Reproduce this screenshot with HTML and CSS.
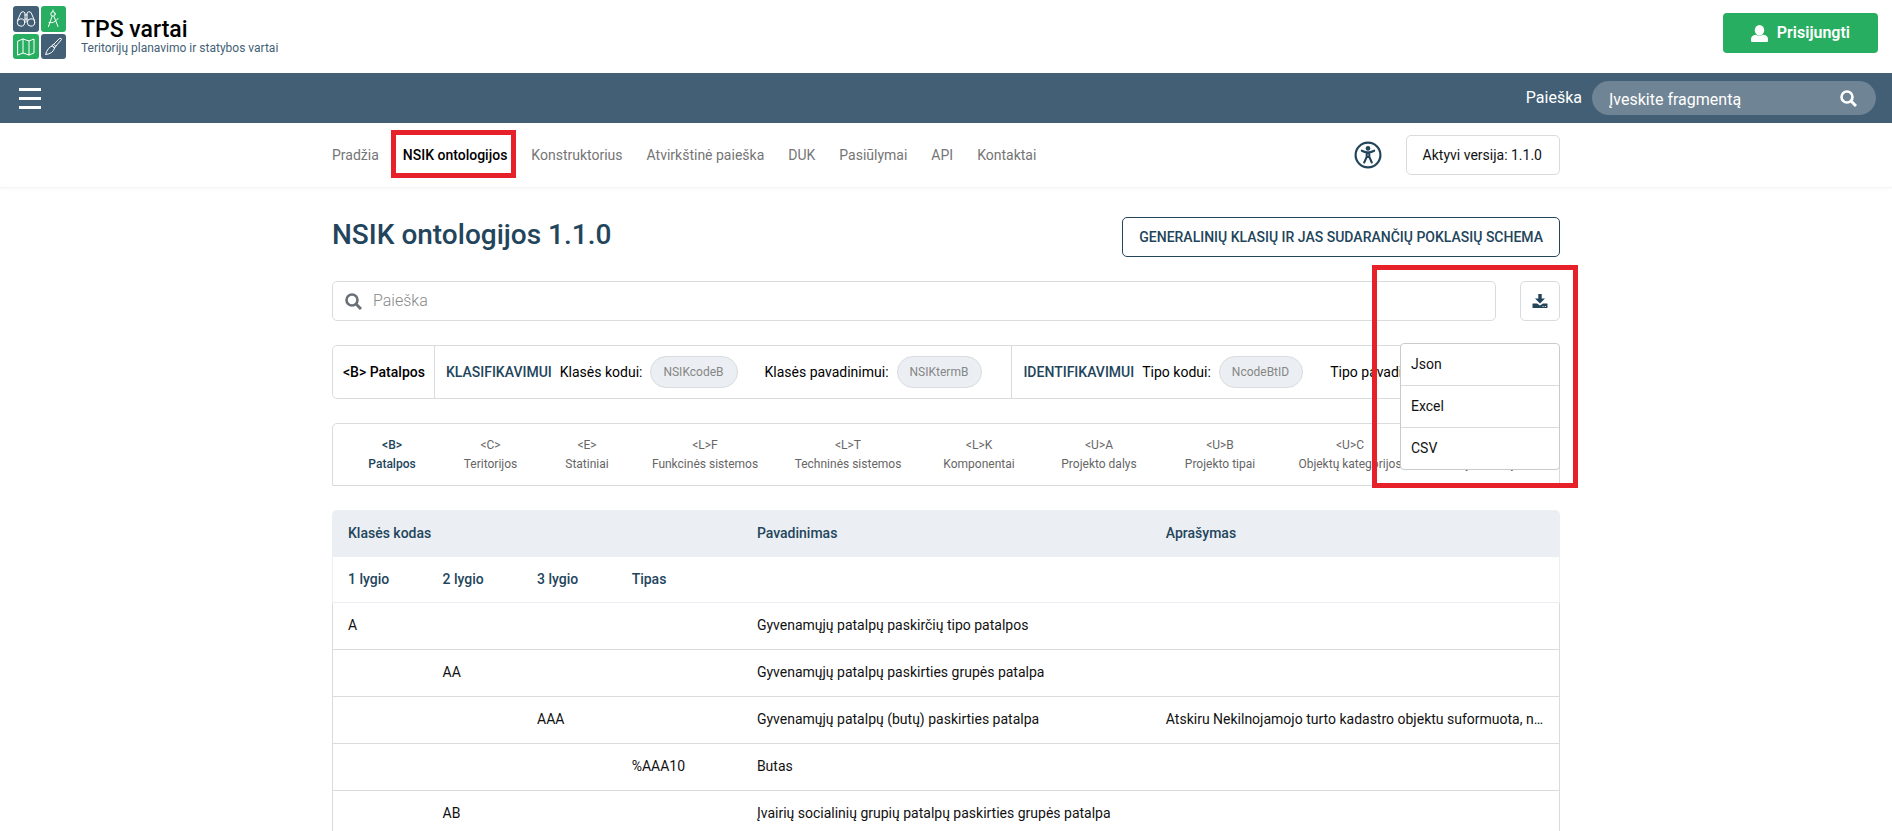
FILE: index.html
```html
<!DOCTYPE html>
<html lang="lt">
<head>
<meta charset="utf-8">
<meta name="viewport" content="width=device-width, initial-scale=1">
<title>TPS vartai</title>
<link rel="stylesheet" href="styles.css">
</head>
<body>
<header class="top">
  <a class="brand" href="#">
    <svg class="brand-logo" viewBox="0 0 54 54" aria-hidden="true">
      <rect x="0" y="0" width="26" height="26" rx="3" fill="#435f75"/>
      <rect x="28" y="0" width="25" height="26" rx="3" fill="#28ae60"/>
      <rect x="0" y="28" width="26" height="25" rx="3" fill="#28ae60"/>
      <rect x="28" y="28" width="25" height="25" rx="3" fill="#435f75"/>
      <g fill="none" stroke="#fff" stroke-width="1" stroke-linecap="round" stroke-linejoin="round">
        <circle cx="8" cy="16.500" r="3.700"/><circle cx="18" cy="16.500" r="3.700"/>
        <path d="M4.500 14.500 8 6.500q2.500-2 4 .5v9M21.500 14.500 18 6.500q-2.500-2-4 .5v9M12 9h2M12 13h2"/>
        <circle cx="40" cy="8" r="2.200"/><path d="M40 4v1.500M39 10.500 35.500 20.500M41 10.500l4 10M36 16.500q5 1.500 9-4"/>
        <path d="m5 35 5-2 6 2 5-2v14l-5 2-6-2-5 2zM10 33v14M16 35v14"/>
        <path d="m41 38 5.500-5.500q2-.8 2 1L43 40zM41 38l-2 1.500 2.500 2.500L43 40M39 40q-4 1-6.500 8.500 7-.5 9-6z"/>
      </g>
    </svg>
    <span class="brand-text">
      <span class="brand-name">TPS vartai</span>
      <span class="brand-sub">Teritorijų planavimo ir statybos vartai</span>
    </span>
  </a>
  <button class="login" type="button">
    <svg width="17" height="17" viewBox="0 0 17 17" fill="currentColor" aria-hidden="true"><ellipse cx="8.500" cy="5.200" rx="4.700" ry="5.200"/><path d="M0 16v-2q0-3.500 4.500-4.200 4 2 8 0Q17 10.500 17 14v2q0 1-1 1H1q-1 0-1-1z"/></svg>
    Prisijungti
  </button>
</header>

<div class="bar">
  <button class="burger" type="button" aria-label="Meniu"><i></i><i></i><i></i></button>
  <form class="bar-search">
    <label for="fragment">Paieška</label>
    <div class="pill">
      <input id="fragment" type="text" placeholder="Įveskite fragmentą">
      <button type="button" aria-label="Ieškoti"><svg width="17" height="17" viewBox="0 0 17 17" fill="none" stroke="currentColor" aria-hidden="true"><circle cx="7" cy="7" r="5.500" stroke-width="2.600"/><path d="m11 11 5 5" stroke-width="3"/></svg></button>
    </div>
  </form>
</div>

<div class="nav-wrap">
  <div class="container nav-row">
    <nav class="nav">
      <a href="#">Pradžia</a>
      <a class="current" href="#">NSIK ontologijos</a>
      <a href="#">Konstruktorius</a>
      <a href="#">Atvirkštinė paieška</a>
      <a href="#">DUK</a>
      <a href="#">Pasiūlymai</a>
      <a href="#">API</a>
      <a href="#">Kontaktai</a>
    </nav>
    <div class="nav-tools">
      <button class="access" type="button" aria-label="Prieinamumas">
        <svg width="28" height="28" viewBox="0 0 28 28" aria-hidden="true"><circle cx="14" cy="14" r="12.400" fill="none" stroke="#23455c" stroke-width="2.200"/><circle cx="14" cy="7.400" r="2.300" fill="#23455c"/><path d="M7.800 9.700q3 1.500 5 1.700h2.400q2-.2 5-1.700M12.700 12h2.600v4h-2.600zM12.700 16l-2.500 5.500M15.300 16l2.500 5.500" fill="none" stroke="#23455c" stroke-width="2.100" stroke-linecap="round" stroke-linejoin="round"/></svg>
      </button>
      <button class="version" type="button">Aktyvi versija: 1.1.0</button>
    </div>
  </div>
</div>

<main class="container">
  <div class="heading">
    <h1>NSIK ontologijos 1.1.0</h1>
    <button class="schema" type="button">GENERALINIŲ KLASIŲ IR JAS SUDARANČIŲ POKLASIŲ SCHEMA</button>
  </div>

  <div class="search-row">
    <div class="search">
      <svg width="17" height="17" viewBox="0 0 17 17" fill="none" stroke="#697078" aria-hidden="true"><circle cx="7" cy="7" r="5.500" stroke-width="2.600"/><path d="m11 11 5 5" stroke-width="3"/></svg>
      <input type="search" aria-label="Paieška" placeholder="Paieška">
    </div>
    <div class="export">
      <button class="download" type="button" aria-label="Atsisiųsti">
        <svg width="16" height="16" viewBox="0 0 16 16" fill="#23455c" aria-hidden="true"><path d="M6.300 1h3.400v4.500H13L8 10.500 3 5.500h3.300z"/><path fill-rule="evenodd" d="M1 10.500h4l3 2 3-2h4q.5 0 .5.500v3.500q0 .5-.5.500H1q-.5 0-.5-.5V11q0-.5.500-.5zM10.500 13v1h1v-1zm2.300 0v1h1v-1z"/></svg>
      </button>
      <div class="menu">
        <button type="button">Json</button>
        <button type="button">Excel</button>
        <button type="button">CSV</button>
      </div>
    </div>
  </div>

  <section class="info">
    <div class="info-name">&lt;B&gt; Patalpos</div>
    <div class="info-group">
      <strong>KLASIFIKAVIMUI</strong>
      <div class="pair">Klasės kodui: <span class="chip">NSIKcodeB</span></div>
      <div class="pair">Klasės pavadinimui: <span class="chip">NSIKtermB</span></div>
    </div>
    <div class="info-group">
      <strong>IDENTIFIKAVIMUI</strong>
      <div class="pair">Tipo kodui: <span class="chip">NcodeBtID</span></div>
      <div class="pair">Tipo pavadinimui: <span class="chip">NtermBtID</span></div>
    </div>
  </section>

  <nav class="tabs">
    <a class="on" href="#">&lt;B&gt;<br>Patalpos</a>
    <a href="#">&lt;C&gt;<br>Teritorijos</a>
    <a href="#">&lt;E&gt;<br>Statiniai</a>
    <a href="#">&lt;L&gt;F<br>Funkcinės sistemos</a>
    <a href="#">&lt;L&gt;T<br>Techninės sistemos</a>
    <a href="#">&lt;L&gt;K<br>Komponentai</a>
    <a href="#">&lt;U&gt;A<br>Projekto dalys</a>
    <a href="#">&lt;U&gt;B<br>Projekto tipai</a>
    <a href="#">&lt;U&gt;C<br>Objektų kategorijos</a>
    <a href="#">&lt;U&gt;D<br>Statybos rūšys</a>
  </nav>

  <table class="grid">
    <colgroup><col class="lvl"><col class="lvl"><col class="lvl"><col class="type"><col class="wide"><col></colgroup>
    <thead>
      <tr class="head"><th colspan="4">Klasės kodas</th><th>Pavadinimas</th><th>Aprašymas</th></tr>
      <tr class="sub"><th>1 lygio</th><th>2 lygio</th><th>3 lygio</th><th>Tipas</th><th></th><th></th></tr>
    </thead>
    <tbody>
      <tr><td>A</td><td></td><td></td><td></td><td>Gyvenamųjų patalpų paskirčių tipo patalpos</td><td></td></tr>
      <tr><td></td><td>AA</td><td></td><td></td><td>Gyvenamųjų patalpų paskirties grupės patalpa</td><td></td></tr>
      <tr><td></td><td></td><td>AAA</td><td></td><td>Gyvenamųjų patalpų (butų) paskirties patalpa</td><td>Atskiru Nekilnojamojo turto kadastro objektu suformuota, n…</td></tr>
      <tr><td></td><td></td><td></td><td>%AAA10</td><td>Butas</td><td></td></tr>
      <tr><td></td><td>AB</td><td></td><td></td><td>Įvairių socialinių grupių patalpų paskirties grupės patalpa</td><td></td></tr>
    </tbody>
  </table>
</main>
</body>
</html>
```

FILE: styles.css
```css
:root {
  --navy: #23455c;
  --slate: #435f75;
  --green: #28ae60;
  --line: #d9dcde;
  --mist: #ebeff3;
  --mark: #e62129;
}

*, *::before, *::after { box-sizing: border-box; }

html { scrollbar-width: none; }

body {
  margin: 0;
  background: #fff;
  color: #111;
  font-family: Roboto, "Liberation Sans", sans-serif;
  font-size: 14px;
  line-height: 20px;
}

a { color: inherit; text-decoration: none; }

button, input {
  font: inherit;
  color: inherit;
  background: none;
  border: 0;
  padding: 0;
  margin: 0;
}

button { cursor: pointer; white-space: nowrap; }
input { outline: 0; min-width: 0; }
svg { display: block; flex: none; }

.container {
  max-width: 1260px;
  margin: 0 auto;
  padding: 0 16px;
}

/* Top header */
.top {
  display: flex;
  align-items: center;
  justify-content: space-between;
  padding: 6px 14px 13px 13px;
}
.brand { display: flex; align-items: center; gap: 14px; }
.brand-logo { width: 54px; height: 54px; }
.brand-text { display: flex; flex-direction: column; padding-top: 5px; }
.brand-name { font-size: 23px; line-height: 25px; font-weight: 500; color: #000; }
.brand-sub { font-size: 12px; line-height: 13px; color: var(--slate); }
.login {
  display: flex;
  align-items: center;
  gap: 9px;
  height: 40px;
  padding: 0 28px;
  border-radius: 4px;
  background: var(--green);
  color: #fff;
  font-size: 16px;
  font-weight: 600;
}

/* Dark bar */
.bar {
  display: flex;
  align-items: center;
  justify-content: space-between;
  min-height: 50px;
  padding: 0 16px 0 19px;
  background: var(--slate);
  color: #fff;
  font-size: 16px;
}
.burger { display: grid; gap: 6px; width: 22px; }
.burger i { height: 3px; background: #fff; }
.bar-search { display: flex; align-items: center; gap: 10px; }
.pill {
  display: flex;
  align-items: center;
  width: 284px;
  height: 34px;
  padding: 0 19px 0 17px;
  border-radius: 17px;
  background: #6f8495;
}
.pill input { flex: 1; padding-top: 3px; }
.pill input::placeholder { color: #fff; opacity: 1; }

/* Section navigation */
.nav-wrap {
  border-bottom: 1px solid #f5f5f5;
  box-shadow: 0 1px 3px #00000008;
}
.nav-row {
  display: flex;
  align-items: center;
  justify-content: space-between;
  min-height: 64px;
}
.nav { display: flex; flex-wrap: wrap; gap: 24px; color: #757575; }
.current { position: relative; color: #000; font-weight: 500; }
.current::after {
  content: "";
  position: absolute;
  inset: -15px -9px -13px -12px;
  border: 5px solid var(--mark);
}
.nav-tools { display: flex; align-items: center; gap: 24px; }
.version {
  height: 40px;
  padding: 0 17px 0 16px;
  border: 1px solid var(--line);
  border-radius: 5px;
}

/* Heading and search */
.heading {
  display: flex;
  align-items: center;
  justify-content: space-between;
  gap: 24px;
  margin: 29px 0 24px;
}
h1 {
  margin: 0;
  padding-bottom: 4px;
  color: var(--navy);
  font-size: 28px;
  line-height: 36px;
  font-weight: 500;
}
.schema {
  height: 40px;
  padding: 0 16px;
  border: 1px solid var(--navy);
  border-radius: 5px;
  color: var(--navy);
  font-weight: 500;
}
.search-row { display: flex; gap: 24px; }
.search {
  flex: 1;
  display: flex;
  align-items: center;
  gap: 11px;
  height: 40px;
  padding: 0 12px;
  border: 1px solid var(--line);
  border-radius: 5px;
}
.search input { flex: 1; font-size: 16px; font-weight: 300; }
.search input::placeholder { color: #888; opacity: 1; }
.export { position: relative; }
.export::after {
  content: "";
  position: absolute;
  z-index: 3;
  top: -16px;
  right: -18px;
  width: 206px;
  height: 223px;
  border: 5px solid var(--mark);
  pointer-events: none;
}
.download {
  display: grid;
  place-items: center;
  width: 40px;
  height: 40px;
  border: 1px solid var(--line);
  border-radius: 5px;
}
.menu {
  position: absolute;
  z-index: 2;
  top: 62px;
  right: 0;
  display: flex;
  flex-direction: column;
  width: 160px;
  border: 1px solid #c8cbcd;
  border-radius: 4px;
  background: #fff;
}
.menu button { height: 42px; padding: 0 10px 2px; text-align: left; }
.menu button:first-child { height: 41px; }
.menu button + button { border-top: 1px solid var(--line); }

/* Ontology summary */
.info {
  display: flex;
  margin-top: 24px;
  border: 1px solid var(--line);
  border-radius: 5px;
  white-space: nowrap;
  color: #000;
}
.info-name { display: flex; align-items: center; padding: 0 9px 0 10px; font-weight: 500; }
.info-group {
  display: flex;
  align-items: center;
  padding: 10px 29px 10px 11px;
  border-left: 1px solid var(--line);
}
.info-group strong { margin-right: 8px; color: var(--navy); font-weight: 500; }
.pair { display: flex; align-items: center; gap: 8px; }
.pair + .pair { margin-left: 27px; }
.chip {
  height: 32px;
  padding: 0 13px 0 12px;
  border: 1px solid var(--line);
  border-radius: 16px;
  background: var(--mist);
  color: #868686;
  font-size: 12px;
  line-height: 30px;
}

/* Ontology tabs */
.tabs {
  display: grid;
  grid-template-columns: 96fr 101fr 92fr 144fr 142fr 120fr 120fr 122fr 138fr 128fr;
  margin-top: 24px;
  padding: 12px 12px 11px 11px;
  border: 1px solid var(--line);
  border-radius: 5px 5px 0 0;
  color: #666;
  font-size: 12px;
  line-height: 19px;
  text-align: center;
  white-space: nowrap;
}
.on { color: var(--navy); font-weight: 500; }

/* Class table */
.grid {
  width: 100%;
  margin-top: 24px;
  table-layout: fixed;
  border-collapse: separate;
  border-spacing: 0;
}
.lvl { width: 7.7%; }
.type { width: 10.2%; }
.wide { width: 33.3%; }
th, td {
  height: 47px;
  padding: 0 16px 2px;
  border-bottom: 1px solid var(--line);
  overflow: hidden;
  text-align: left;
  text-overflow: ellipsis;
  white-space: nowrap;
}
th { color: var(--navy); font-weight: 500; }
td:first-child { border-left: 1px solid var(--line); padding-left: 15px; }
td:last-child { border-right: 1px solid var(--line); padding-right: 8px; }
.head th { background: var(--mist); border-bottom: 0; }
.head th:first-child { border-top-left-radius: 5px; }
.head th:last-child { border-top-right-radius: 5px; }
.sub th { height: 46px; border-color: var(--mist); }
.sub th:first-child { border-left: 1px solid var(--mist); padding-left: 15px; }
.sub th:last-child { border-right: 1px solid var(--mist); }
```
